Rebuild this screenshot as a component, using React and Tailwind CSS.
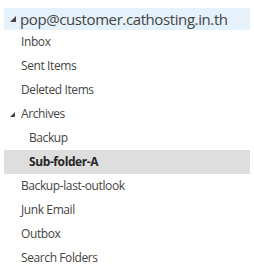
import React from 'react'

const folders = [
  { name: 'Inbox', indent: 0 },
  { name: 'Sent Items', indent: 0 },
  { name: 'Deleted Items', indent: 0 },
  { name: 'Archives', indent: 0, open: true },
  { name: 'Backup', indent: 1 },
  { name: 'Sub-folder-A', indent: 1, selected: true },
  { name: 'Backup-last-outlook', indent: 0 },
  { name: 'Junk Email', indent: 0 },
  { name: 'Outbox', indent: 0 },
  { name: 'Search Folders', indent: 0 },
]

function Caret({ size }) {
  return (
    <svg width={size} height={size} viewBox="0 0 10 10" className="shrink-0">
      <polygon points="10,0 10,10 0,10" fill="#444" />
    </svg>
  )
}

export default function App() {
  return (
    <div
      className="w-[254px] h-[278px] bg-white pt-[8px] px-[4px] text-[#444]"
      style={{ fontFamily: '"Open Sans", "Noto Sans", sans-serif' }}
    >
      <div className="h-[22px] bg-[#e5f1fb] flex items-center pl-[6px] gap-[4px]">
        <Caret size={6} />
        <span className="text-[15px] leading-none tracking-[-0.4px]">pop@customer.cathosting.in.th</span>
      </div>
      {folders.map((f) => (
        <div
          key={f.name}
          className={`h-[24px] flex items-center text-[12px] tracking-[-0.4px] ${
            f.selected ? 'bg-[#dedede] font-bold text-[#262626]' : ''
          } ${f.indent ? 'pl-[25px]' : 'pl-[17px]'}`}
        >
          {f.open && (
            <span className="-ml-[11px] mr-[6px] flex">
              <Caret size={5} />
            </span>
          )}
          {f.name}
        </div>
      ))}
    </div>
  )
}
